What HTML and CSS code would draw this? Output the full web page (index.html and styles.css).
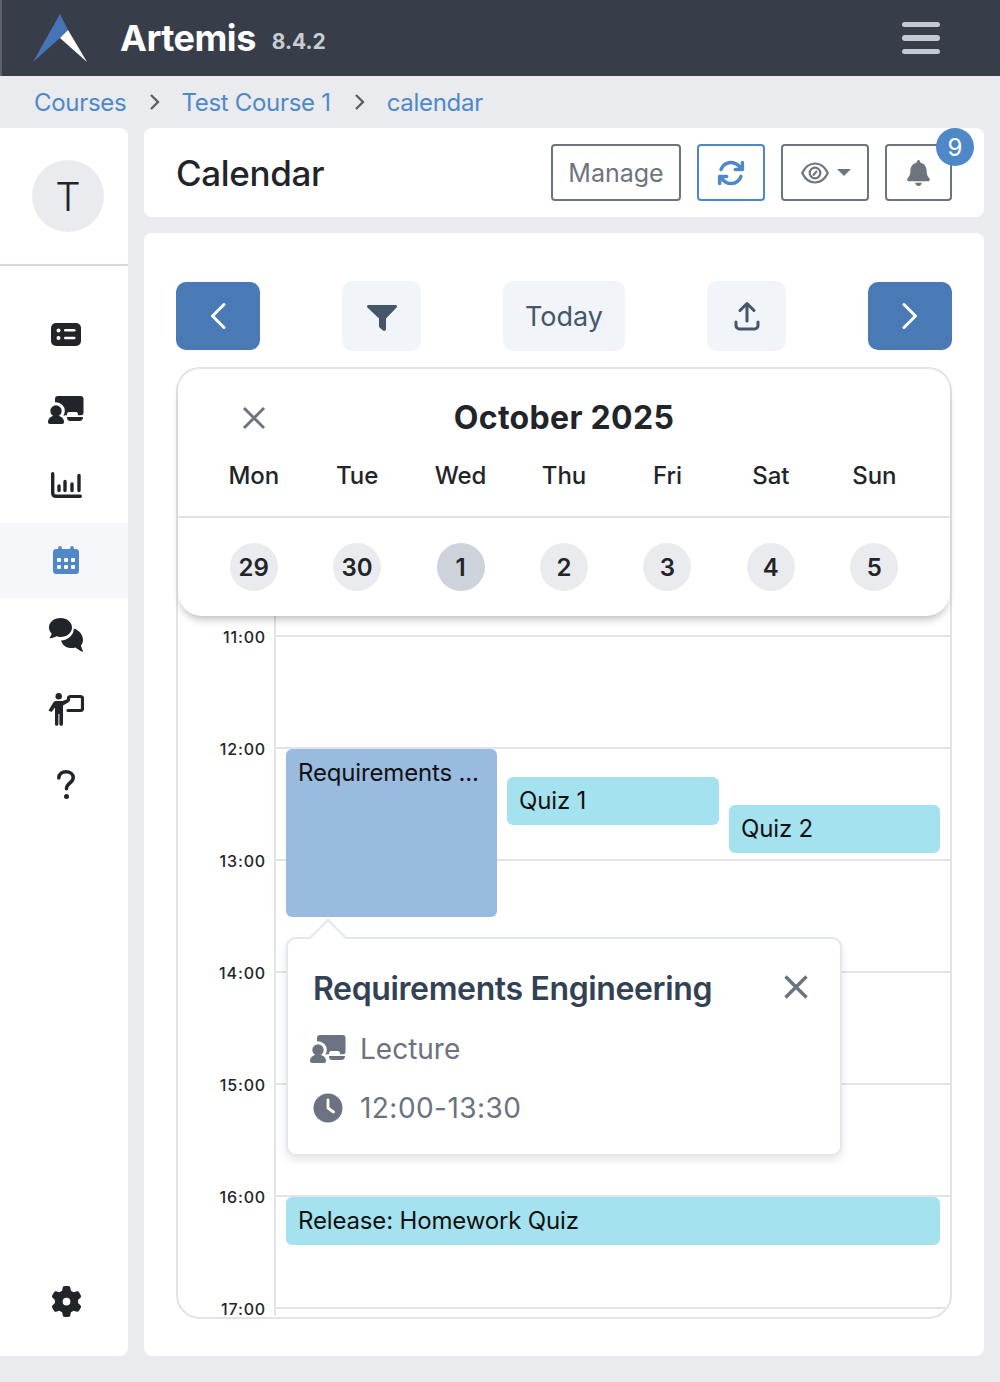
FILE: index.html
```html
<!DOCTYPE html>
<html lang="en">
<head>
  <meta charset="UTF-8">
  <title>Artemis - Calendar</title>
  <link rel="stylesheet" href="styles.css">
</head>
<body>
  <!-- Shared icons -->
  <svg class="sprite" aria-hidden="true">
    <symbol id="icon-lecture" viewBox="0 0 36 28">
      <rect x="7" y="0" width="28.5" height="19.5" rx="3" fill="currentColor"/>
      <circle cx="8" cy="15" r="8.8" fill="#fff"/>
      <circle cx="8" cy="15" r="5.7" fill="currentColor"/>
      <rect x="19" y="16" width="11" height="4.5" rx="2.2" fill="#fff"/>
      <rect x="17" y="19.5" width="19" height="1.5" fill="#fff"/>
      <path d="M19 21h16c0 2.5-1.5 4-3.5 4H22c-2 0-3-1.5-3-4z" fill="currentColor"/>
      <path d="M0 26c0-3.500 3-6 6-6h4c3 0 6 2.500 6 6 0 1.200-.8 2-2 2H2c-1.200 0-2-.8-2-2z" fill="currentColor"/>
    </symbol>
  </svg>

  <nav class="navbar">
    <div class="brand">
      <svg class="logo" viewBox="0 0 54 48">
        <path d="M27 0 35 16 27 24 0 48z" fill="#4674b4"/>
        <path d="M35 16 54 48 27 24z" fill="#fff"/>
      </svg>
      <span class="brand-name">Artemis</span>
      <span class="brand-version">8.4.2</span>
    </div>
    <div class="hamburger"><span></span><span></span><span></span></div>
  </nav>

  <div class="breadcrumb">
    <a href="#">Courses</a>
    <svg class="crumb-sep" viewBox="0 0 12 18"><path d="M2 2l7 7-7 7"/></svg>
    <a href="#">Test Course 1</a>
    <svg class="crumb-sep" viewBox="0 0 12 18"><path d="M2 2l7 7-7 7"/></svg>
    <a href="#">calendar</a>
  </div>

  <div class="layout">
    <aside class="sidebar">
      <div class="avatar-wrap"><div class="avatar">T</div></div>
      <div class="side-item">
        <svg class="side-icon" width="30" height="23" viewBox="0 0 30 23">
          <rect width="30" height="23" rx="5" fill="currentColor"/>
          <circle cx="7.500" cy="7.500" r="2" fill="#fff"/>
          <circle cx="7.500" cy="15" r="2" fill="#fff"/>
          <rect x="13" y="6" width="11.500" height="2.600" rx="1.300" fill="#fff"/>
          <rect x="13" y="13.700" width="11.500" height="2.600" rx="1.300" fill="#fff"/>
        </svg>
      </div>
      <div class="side-item">
        <svg class="side-icon" width="36" height="28"><use href="#icon-lecture"/></svg>
      </div>
      <div class="side-item">
        <svg class="side-icon" width="31" height="26" viewBox="0 0 31 26">
          <path d="M1.700 1.700v19c0 2.300 1.300 3.600 3.600 3.600h24" fill="none" stroke="currentColor" stroke-width="3.400" stroke-linecap="round"/>
          <path d="M8 14v4.500M14 9.500v9M21 12v6.500M28 3.500v15" fill="none" stroke="currentColor" stroke-width="3.400" stroke-linecap="round"/>
        </svg>
      </div>
      <div class="side-item active">
        <svg class="side-icon" width="26" height="28" viewBox="0 0 26 28">
          <path d="M7 0c1 0 1.800.8 1.800 1.800V3h8.400V1.800C17.200.8 18 0 19 0s1.800.8 1.800 1.800V3H23c1.700 0 3 1.300 3 3v19c0 1.700-1.300 3-3 3H3c-1.700 0-3-1.300-3-3V6c0-1.700 1.300-3 3-3h2.200V1.800C5.200.8 6 0 7 0z" fill="currentColor"/>
          <g fill="#fff">
            <rect x="4" y="12" width="4" height="4" rx="1"/><rect x="11" y="12" width="4" height="4" rx="1"/><rect x="18" y="12" width="4" height="4" rx="1"/>
            <rect x="4" y="19" width="4" height="4" rx="1"/><rect x="11" y="19" width="4" height="4" rx="1"/><rect x="18" y="19" width="4" height="4" rx="1"/>
          </g>
        </svg>
      </div>
      <div class="side-item">
        <svg class="side-icon" width="34" height="34" viewBox="0 0 34 34">
          <path d="M11.500 0C5 0 0 4.200 0 9.500c0 2.400 1 4.500 2.700 6.200-.3 1.500-1 2.700-2 3.700-.3.400 0 .9.500.8 2.300-.2 4.400-.9 6.200-1.900 1.200.4 2.600.7 4.100.7 6.400 0 11.500-4.200 11.500-9.500S17.900 0 11.500 0z" fill="currentColor"/>
          <path d="M24.800 10.500c.1 6.300-5.600 11.500-12.800 12 1 4.500 5.400 7.600 10.500 7.600 1.400 0 2.700-.2 3.900-.6 1.700 1.300 4.100 2.800 6.700 4.200.5.200 1-.3.800-.8-.8-1.900-1.500-3.800-1.900-5.500 1.300-1.500 2-3.400 2-5.400 0-5.300-4-10-9.200-11.500z" fill="currentColor"/>
        </svg>
      </div>
      <div class="side-item">
        <svg class="side-icon" width="36" height="33" viewBox="0 0 36 33">
          <circle cx="10.700" cy="3.200" r="3.200" fill="currentColor"/>
          <path d="M7.500 8h7l5.500-2 1 3-6 3.500V31c0 1-.8 1.800-1.800 1.800s-1.800-.8-1.800-1.800V21h-1v10c0 1-.8 1.800-1.800 1.800S7 32 7 31V14.500l-3.500 4.500L.5 17.500 5 10C5.800 8.700 6.500 8 7.500 8z" fill="currentColor"/>
          <path d="M20.500 7V5.500c0-1.200.8-2 2-2h10c1.200 0 2 .8 2 2v10c0 1.200-.8 2-2 2H20" fill="none" stroke="currentColor" stroke-width="3.200" stroke-linecap="round"/>
        </svg>
      </div>
      <div class="side-item">
        <svg class="side-icon" width="18" height="29" viewBox="0 0 18 29">
          <path d="M1.800 8C1.800 4 5 1.800 9 1.800s7.200 2.400 7.200 5.900c0 5-6.700 5.500-6.700 11" fill="none" stroke="currentColor" stroke-width="3.500" stroke-linecap="round"/>
          <circle cx="9.500" cy="26.500" r="2.500" fill="currentColor"/>
        </svg>
      </div>
      <div class="side-item side-bottom">
        <svg class="side-icon" width="31" height="31" viewBox="0 0 512 512">
          <path fill="currentColor" d="M495.900 166.600c3.200 8.700.5 18.400-6.400 24.600l-43.300 39.400c1.100 8.300 1.700 16.800 1.700 25.400s-.6 17.100-1.700 25.400l43.300 39.400c6.900 6.200 9.600 15.900 6.400 24.600c-4.400 11.900-9.700 23.300-15.800 34.300l-4.700 8.100c-6.600 11-14 21.400-22.100 31.200c-5.900 7.200-15.700 9.600-24.500 6.800l-55.700-17.700c-13.400 10.300-28.200 18.900-44 25.400l-12.500 57.100c-2 9.100-9 16.300-18.200 17.800c-13.800 2.300-28 3.500-42.500 3.500s-28.700-1.200-42.500-3.500c-9.200-1.500-16.200-8.700-18.200-17.800l-12.500-57.100c-15.800-6.500-30.600-15.100-44-25.400L83.100 425.900c-8.800 2.800-18.600.3-24.500-6.800c-8.100-9.800-15.500-20.200-22.100-31.200l-4.700-8.100c-6.100-11-11.400-22.400-15.800-34.300c-3.200-8.700-.5-18.400 6.400-24.600l43.300-39.400C64.600 273.100 64 264.600 64 256s.6-17.100 1.700-25.400L22.400 191.200c-6.900-6.200-9.600-15.900-6.400-24.600c4.400-11.900 9.700-23.300 15.800-34.300l4.700-8.100c6.600-11 14-21.400 22.100-31.200c5.900-7.200 15.700-9.600 24.500-6.800l55.700 17.700c13.400-10.300 28.200-18.900 44-25.400l12.500-57.100c2-9.100 9-16.300 18.200-17.800C227.300 1.200 241.500 0 256 0s28.700 1.200 42.500 3.500c9.200 1.500 16.200 8.700 18.200 17.800l12.500 57.100c15.800 6.500 30.600 15.100 44 25.400l55.700-17.700c8.800-2.800 18.600-.3 24.500 6.800c8.100 9.800 15.500 20.200 22.100 31.200l4.700 8.100c6.100 11 11.400 22.400 15.800 34.300zM256 320a64 64 0 1 0 0-128 64 64 0 1 0 0 128z"/>
        </svg>
      </div>
    </aside>

    <main class="content">
      <header class="page-header">
        <h1>Calendar</h1>
        <div class="header-actions">
          <button class="btn-outline btn-manage">Manage</button>
          <button class="btn-outline btn-sync">
            <svg width="28" height="28" viewBox="0 0 512 512"><path fill="currentColor" d="M105.100 202.600c7.700-21.800 20.200-42.300 37.800-59.800c62.500-62.500 163.800-62.500 226.300 0L386.300 160H336c-17.700 0-32 14.300-32 32s14.300 32 32 32H463.500h.4c17.700 0 32-14.300 32-32V64c0-17.700-14.300-32-32-32s-32 14.300-32 32v51.200L414.400 97.600c-87.500-87.500-229.300-87.500-316.800 0C73.200 122 55.600 150.700 44.800 181.400c-5.900 16.700 2.900 34.900 19.500 40.800s34.900-2.900 40.800-19.500zM39 289.300c-5 1.500-9.800 4.200-13.700 8.200c-4 4-6.700 8.800-8.100 14c-.3 1.200-.6 2.500-.8 3.800c-.3 1.700-.4 3.400-.4 5.100V448c0 17.700 14.300 32 32 32s32-14.300 32-32V396.900l17.600 17.500c87.500 87.400 229.300 87.400 316.700 0c24.400-24.400 42.100-53.100 52.900-83.700c5.900-16.700-2.900-34.900-19.500-40.800s-34.900 2.900-40.800 19.500c-7.700 21.800-20.200 42.300-37.800 59.800c-62.500 62.500-163.800 62.500-226.300 0l-.1-.1L125.600 352H176c17.700 0 32-14.300 32-32s-14.300-32-32-32H48.400c-1.600 0-3.200.1-4.800.3s-3.100.5-4.600 1z"/></svg>
          </button>
          <button class="btn-outline btn-eye">
            <svg width="28" height="22" viewBox="0 0 28 22">
              <path d="M1.200 11C4 5 8.500 1.500 14 1.500S24 5 26.800 11C24 17 19.500 20.500 14 20.500S4 17 1.200 11z" fill="none" stroke="currentColor" stroke-width="2.200"/>
              <circle cx="14" cy="11" r="5.300" fill="none" stroke="currentColor" stroke-width="2.200"/>
              <path d="M12.500 13l3-3.500" stroke="currentColor" stroke-width="2" stroke-linecap="round"/>
            </svg>
            <span class="caret"></span>
          </button>
          <div class="bell-wrap">
            <button class="btn-outline btn-bell">
              <svg width="23" height="26" viewBox="0 0 448 512"><path fill="currentColor" d="M224 0c-17.700 0-32 14.300-32 32V51.200C119 66 64 130.600 64 208v18.800c0 47-17.300 92.400-48.500 127.600l-7.400 8.300c-8.400 9.400-10.400 22.900-5.300 34.400S19.400 416 32 416H416c12.600 0 24-7.400 29.200-18.900s3.100-25-5.300-34.400l-7.400-8.300C401.300 319.200 384 273.900 384 226.800V208c0-77.400-55-142-128-156.800V32c0-17.700-14.300-32-32-32zm45.300 493.300c12-12 18.700-28.300 18.700-45.300H224 160c0 17 6.700 33.300 18.700 45.300s28.300 18.700 45.300 18.700s33.300-6.700 45.300-18.700z"/></svg>
            </button>
            <span class="badge">9</span>
          </div>
        </div>
      </header>

      <section class="calendar-card">
        <div class="toolbar">
          <button class="nav-btn">
            <svg width="16" height="28" viewBox="0 0 16 28"><path d="M14 2.500 2.500 14 14 25.500"/></svg>
          </button>
          <button class="tool-btn tool-filter">
            <svg width="30" height="26" viewBox="0 0 30 26"><path fill="currentColor" d="M1.500 0h27c1.300 0 2 1.500 1.100 2.500L19 13.500V24c0 1.700-1.800 2.600-3 1.500l-3.500-3c-.3-.3-.5-.7-.5-1.200v-7.800L.4 2.500C-.5 1.500.2 0 1.500 0z"/></svg>
          </button>
          <button class="tool-btn tool-today">Today</button>
          <button class="tool-btn">
            <svg width="26" height="30" viewBox="0 0 26 30"><path d="M13 20V3M6 9.500 13 2.500l7 7M2 21v3.500C2 26.500 3.500 28 5.500 28h15c2 0 3.500-1.500 3.500-3.500V21" fill="none" stroke="currentColor" stroke-width="3" stroke-linecap="round" stroke-linejoin="round"/></svg>
          </button>
          <button class="nav-btn">
            <svg width="16" height="28" viewBox="0 0 16 28"><path d="M2 2.500 13.500 14 2 25.500"/></svg>
          </button>
        </div>

        <div class="week-view">
          <div class="week-head">
            <div class="week-top">
              <div class="week-title-row">
                <svg class="week-close" width="24" height="24" viewBox="0 0 24 24"><path d="M2 2l20 20M22 2 2 22"/></svg>
                <div class="week-title">October 2025</div>
              </div>
              <div class="week-days">
                <span>Mon</span><span>Tue</span><span>Wed</span><span>Thu</span><span>Fri</span><span>Sat</span><span>Sun</span>
              </div>
            </div>
            <div class="week-dates">
              <span class="date">29</span>
              <span class="date">30</span>
              <span class="date selected">1</span>
              <span class="date">2</span>
              <span class="date">3</span>
              <span class="date">4</span>
              <span class="date">5</span>
            </div>
          </div>

          <div class="time-grid">
            <div class="grid-start"><div class="axis"></div><div class="slot-blank"></div></div>
            <div class="hour"><div class="axis"><span>11:00</span></div><div class="slot"></div></div>
            <div class="hour"><div class="axis"><span>12:00</span></div><div class="slot"></div></div>
            <div class="hour"><div class="axis"><span>13:00</span></div><div class="slot"></div></div>
            <div class="hour"><div class="axis"><span>14:00</span></div><div class="slot"></div></div>
            <div class="hour"><div class="axis"><span>15:00</span></div><div class="slot"></div></div>
            <div class="hour"><div class="axis"><span>16:00</span></div><div class="slot"></div></div>
            <div class="hour hour-last"><div class="axis"><span>17:00</span></div><div class="slot"></div></div>

            <!-- events sit at their time on the grid -->
            <div class="event event-lecture" style="left: 108px; top: 133px; width: 211px; height: 168px;">Requirements ...</div>
            <div class="event event-quiz" style="left: 329px; top: 161px; width: 212px; height: 48px;">Quiz 1</div>
            <div class="event event-quiz" style="left: 551px; top: 189px; width: 211px; height: 48px;">Quiz 2</div>
            <div class="event event-quiz" style="left: 108px; top: 581px; width: 654px; height: 48px;">Release: Homework Quiz</div>

            <div class="popover">
              <div class="popover-head">
                <div class="popover-title">Requirements Engineering</div>
                <svg class="popover-close" width="26" height="26" viewBox="0 0 26 26"><path d="M2.500 2.500l21 21M23.500 2.500l-21 21"/></svg>
              </div>
              <div class="popover-row">
                <svg class="popover-icon" width="36" height="28"><use href="#icon-lecture"/></svg>
                <span>Lecture</span>
              </div>
              <div class="popover-row">
                <svg class="popover-icon" width="36" height="30" viewBox="0 0 36 30">
                  <circle cx="18" cy="15" r="14.500" fill="currentColor"/>
                  <path d="M18 7v8l5.500 4" fill="none" stroke="#fff" stroke-width="2.800" stroke-linecap="round" stroke-linejoin="round"/>
                </svg>
                <span class="popover-time">12:00-13:30</span>
              </div>
            </div>
          </div>
        </div>
      </section>
    </main>
  </div>
</body>
</html>
```

FILE: styles.css
```css
* {
  box-sizing: border-box;
}

body {
  margin: 0;
  height: 1382px;
  background: #e9ebef;
  color: #212529;
  font-family: Inter, "Liberation Sans", sans-serif;
  overflow: hidden;
}

.sprite {
  display: none;
}

/* Top bar */
.navbar {
  height: 76px;
  background: #383e49;
  border-left: 2px solid #5c616b;
  display: flex;
  align-items: center;
  justify-content: space-between;
  padding: 0 60px 0 31px;
}

.brand {
  display: flex;
  align-items: center;
}

.logo {
  width: 54px;
  height: 48px;
  margin-right: 33px;
}

.brand-name {
  color: #fff;
  font-size: 36px;
  font-weight: 700;
  letter-spacing: -0.5px;
}

.brand-version {
  color: #c8ccd3;
  font-size: 21px;
  font-weight: 700;
  margin: 6px 0 0 16px;
}

.hamburger {
  width: 38px;
  display: flex;
  flex-direction: column;
  gap: 8px;
}

.hamburger span {
  height: 5.5px;
  border-radius: 3px;
  background: #c5c9d1;
}

/* Breadcrumb */
.breadcrumb {
  height: 52px;
  padding-left: 34px;
  display: flex;
  align-items: center;
  font-size: 24px;
  letter-spacing: -0.3px;
}

.breadcrumb a {
  color: #4f88c9;
  text-decoration: none;
}

.crumb-sep {
  width: 12px;
  height: 18px;
  margin: 0 20px 0 23px;
  fill: none;
  stroke: #5a5f66;
  stroke-width: 2.400;
}

.crumb-sep:last-of-type {
  margin-right: 21px;
}

/* Page columns */
.layout {
  display: flex;
  gap: 16px;
  height: 1228px;
  padding-right: 16px;
}

.sidebar {
  width: 128px;
  background: #fff;
  border-radius: 0 8px 8px 0;
  display: flex;
  flex-direction: column;
}

.avatar-wrap {
  height: 138px;
  padding: 32px 0 0 32px;
  border-bottom: 2px solid #d5d8dd;
  margin-bottom: 32px;
}

.avatar {
  width: 72px;
  height: 72px;
  border-radius: 50%;
  background: #e9ebef;
  display: flex;
  align-items: center;
  justify-content: center;
  font-size: 40px;
  font-weight: 300;
}

.side-item {
  height: 75px;
  padding: 0 0 2px 4px;
  display: flex;
  align-items: center;
  justify-content: center;
  color: #212529;
}

.side-item.active {
  background: #f5f7fa;
  color: #4f88c9;
}

.side-bottom {
  margin-top: auto;
  margin-bottom: 16px;
}

.content {
  flex: 1;
  display: flex;
  flex-direction: column;
  gap: 16px;
}

/* Page header */
.page-header {
  height: 89px;
  background: #fff;
  border-radius: 8px;
  padding: 16px 32px;
  display: flex;
  align-items: flex-start;
  justify-content: space-between;
}

.page-header h1 {
  margin: 0;
  font-size: 35px;
  font-weight: 500;
  letter-spacing: -0.35px;
  line-height: 59px;
}

.header-actions {
  display: flex;
  gap: 16px;
}

.btn-outline {
  height: 57px;
  background: #fff;
  border: 2px solid #6c757d;
  border-radius: 4px;
  color: #6c757d;
  font-family: inherit;
  font-size: 25px;
  display: flex;
  align-items: center;
  justify-content: center;
  padding: 0;
}

.btn-manage {
  width: 130px;
}

.btn-sync {
  width: 68px;
  border-color: #4f88c9;
  color: #4f88c9;
}

.btn-eye {
  width: 88px;
  gap: 8px;
  padding-left: 2px;
}

.caret {
  border-left: 7px solid transparent;
  border-right: 7px solid transparent;
  border-top: 7px solid #6c757d;
}

.bell-wrap {
  position: relative;
}

.btn-bell {
  width: 67px;
}

.badge {
  position: absolute;
  top: -16px;
  right: -22px;
  width: 38px;
  height: 38px;
  border-radius: 50%;
  background: #4f88c9;
  color: #fff;
  font-size: 24px;
  display: flex;
  align-items: center;
  justify-content: center;
}

/* Calendar card */
.calendar-card {
  flex: 1;
  background: #fff;
  border-radius: 8px;
  padding: 48px 32px 37px;
  display: flex;
  flex-direction: column;
  gap: 16px;
  min-height: 0;
}

.toolbar {
  display: flex;
  align-items: center;
  justify-content: space-between;
  height: 70px;
}

.nav-btn {
  width: 84px;
  height: 68px;
  background: #4a7ab5;
  border: none;
  border-radius: 10px;
  display: flex;
  align-items: center;
  justify-content: center;
}

.nav-btn path {
  fill: none;
  stroke: #fff;
  stroke-width: 3;
  stroke-linecap: round;
  stroke-linejoin: round;
}

.tool-btn {
  width: 79px;
  height: 70px;
  background: #f1f5f9;
  border: none;
  border-radius: 10px;
  color: #475569;
  font-family: inherit;
  font-size: 27px;
  display: flex;
  align-items: center;
  justify-content: center;
}

.tool-filter svg {
  margin-top: 3px;
}

.tool-today {
  width: 122px;
}

.week-view {
  flex: 1;
  min-height: 0;
  border: 2px solid #e2e4e9;
  border-radius: 24px;
  display: flex;
  flex-direction: column;
}

.week-head {
  position: relative;
  z-index: 2;
  background: #fff;
  border-radius: 22px 22px 24px 24px;
  box-shadow: 0 6px 8px -3px rgba(0, 0, 0, 0.28);
  flex: none;
}

.week-top {
  height: 149px;
  border-bottom: 2px solid #dfe3e8;
  padding: 0 24px;
}

.week-title-row {
  height: 97px;
  display: grid;
  grid-template-columns: repeat(7, 1fr);
  align-items: center;
  justify-items: center;
}

.week-close {
  fill: none;
  stroke: #6c757d;
  stroke-width: 3;
}

.week-title {
  grid-column: 2 / 7;
  font-size: 32px;
  font-weight: 700;
  letter-spacing: 0.3px;
}

.week-days,
.week-dates {
  display: grid;
  grid-template-columns: repeat(7, 1fr);
  justify-items: center;
  align-items: center;
}

.week-days {
  font-size: 24px;
  font-weight: 500;
  line-height: 20px;
  letter-spacing: -0.1px;
}

.week-dates {
  height: 98px;
  padding: 0 24px;
}

.date {
  width: 48px;
  height: 48px;
  border-radius: 50%;
  background: #e9ebef;
  display: flex;
  align-items: center;
  justify-content: center;
  font-size: 24px;
  font-weight: 600;
}

.date.selected {
  background: #ced3db;
}

/* Hours */
.time-grid {
  position: relative;
  flex: 1;
  min-height: 0;
}

.grid-start,
.hour {
  display: flex;
}

.grid-start {
  height: 19px;
}

.hour {
  height: 112px;
}

.hour-last {
  height: 9px;
}

.hour-last .slot {
  margin-right: 4px;
}

.axis {
  width: 98px;
  flex: none;
  border-right: 2px solid #e2e4e9;
  text-align: right;
  padding-right: 8px;
}

.axis span {
  display: block;
  margin-top: -6px;
  font-size: 16px;
  font-weight: 500;
  line-height: 16px;
  letter-spacing: 0.85px;
  color: #212529;
}

.slot-blank {
  flex: 1;
}

.slot {
  flex: 1;
  border-top: 2px solid #e2e4e9;
}

.event {
  position: absolute;
  border-radius: 6px;
  padding: 0 12px;
  font-size: 24px;
  line-height: 48px;
  letter-spacing: -0.16px;
  color: #111;
  white-space: nowrap;
  overflow: hidden;
}

.event-lecture {
  background: #99bbdf;
}

.event-quiz {
  background: #a5e2ef;
}

/* Event popover */
.popover {
  position: absolute;
  z-index: 3;
  left: 108px;
  top: 321px;
  width: 556px;
  height: 219px;
  background: #fff;
  border: 2px solid #e2e8f0;
  border-radius: 10px;
  box-shadow: 0 4px 8px rgba(0, 0, 0, 0.1);
  padding: 25px 24px 0 25px;
  color: #6b7280;
}

.popover::before {
  content: "";
  position: absolute;
  left: 27px;
  top: -15px;
  width: 24px;
  height: 24px;
  background: #fff;
  border-left: 2px solid #e2e8f0;
  border-top: 2px solid #e2e8f0;
  transform: rotate(45deg);
}

.popover-head {
  position: relative;
  display: flex;
  align-items: center;
  justify-content: space-between;
  height: 48px;
  margin-bottom: 7px;
  padding-right: 7px;
}

.popover-title {
  font-size: 32px;
  font-weight: 600;
  letter-spacing: -0.37px;
  color: #334155;
}

.popover-close {
  margin-bottom: 2px;
  fill: none;
  stroke: #6c757d;
  stroke-width: 3.500;
}

.popover-row {
  display: flex;
  align-items: center;
  gap: 14px;
  height: 59px;
  font-size: 28px;
}

.popover-icon {
  margin-left: -3px;
}

.popover-time {
  letter-spacing: 0.45px;
}
```
